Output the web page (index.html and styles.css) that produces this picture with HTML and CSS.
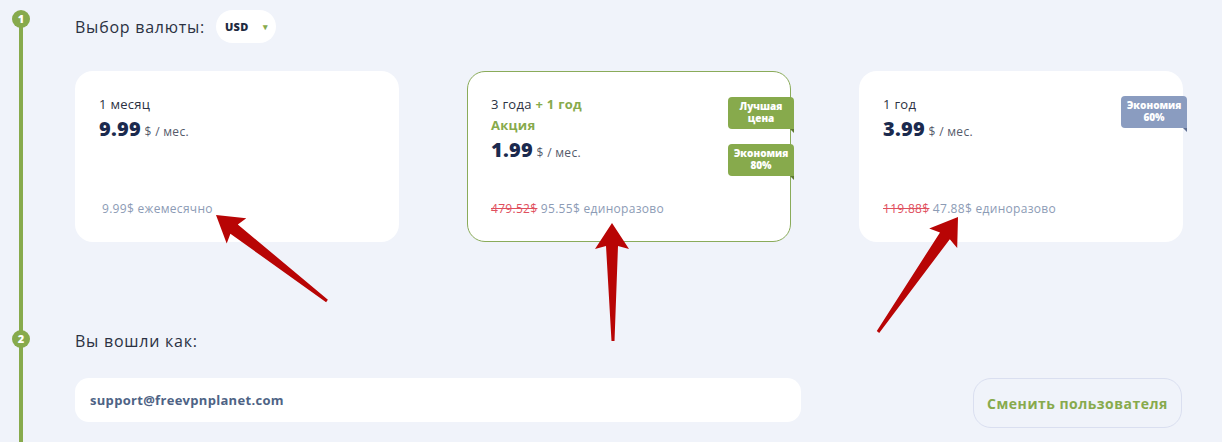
FILE: index.html
```html
<!DOCTYPE html>
<html lang="ru">
<head>
  <meta charset="UTF-8">
  <title>Выбор тарифа</title>
  <link rel="stylesheet" href="styles.css">
</head>
<body>
  <div class="steps">
    <div class="step">
      <span class="marker">1</span>
      <div class="step-head">
        <span class="step-title">Выбор валюты:</span>
        <div class="currency">USD <span class="caret">▾</span></div>
      </div>

      <div class="plans">
        <div class="plan">
          <div class="plan-name">1 месяц</div>
          <div class="plan-price"><b>9.99</b> $ / мес.</div>
          <div class="plan-total plan-total-shift">9.99$ ежемесячно</div>
        </div>

        <div class="plan plan-active">
          <div class="plan-name">3 года <span class="bonus">+ 1 год</span></div>
          <div class="plan-promo">Акция</div>
          <div class="plan-price"><b>1.99</b> $ / мес.</div>
          <div class="plan-total"><s>479.52$</s> 95.55$ единоразово</div>
          <div class="badge badge-top">Лучшая<br>цена</div>
          <div class="badge badge-second">Экономия<br>80%</div>
        </div>

        <div class="plan">
          <div class="plan-name">1 год</div>
          <div class="plan-price"><b>3.99</b> $ / мес.</div>
          <div class="plan-total"><s>119.88$</s> 47.88$ единоразово</div>
          <div class="badge badge-top badge-grey">Экономия<br>60%</div>
        </div>
      </div>
    </div>

    <div class="step step-user">
      <span class="marker">2</span>
      <div class="step-head">
        <span class="step-title">Вы вошли как:</span>
      </div>
      <div class="user-row">
        <div class="user-field">support@freevpnplanet.com</div>
        <button class="switch-btn">Сменить пользователя</button>
      </div>
    </div>
  </div>

  <!-- стрелки-пометки поверх скриншота -->
  <svg class="arrows" width="1222" height="442" viewBox="0 0 1222 442">
    <polygon points="216,215 246.3,218.3 237.8,224.4 327.9,299.8 326.1,302.2 230.4,233.8 226.7,243.5"/>
    <polygon points="612,223 629,249 618,246 614.5,341 611.5,341 606,246 595,249"/>
    <polygon points="958,217 957.2,248 949.8,239.2 879.2,332.9 876.8,331.1 940,232.4 929.2,228.6"/>
  </svg>
</body>
</html>
```

FILE: styles.css
```css
body {
  margin: 0;
  background: #f0f3fa;
  font-family: "Open Sans", Arial, sans-serif;
  letter-spacing: 0.3px;
  color: #2b3142;
  position: relative;
  height: 442px;
  overflow: hidden;
}
.steps {
  position: relative;
  height: 442px;
  box-sizing: border-box;
  padding: 10px 40px 0 75px;
}
.steps::before {
  content: "";
  position: absolute;
  left: 19px;
  top: 19px;
  bottom: 0;
  width: 4px;
  background: #87aa4c;
}
.step {
  position: relative;
}
.marker {
  position: absolute;
  left: -63px;
  top: 0;
  width: 18px;
  height: 18px;
  border-radius: 50%;
  background: #87aa4c;
  color: #fff;
  font-size: 11px;
  font-weight: 800;
  line-height: 18px;
  letter-spacing: 0;
  text-align: center;
}
.step-head {
  display: flex;
  align-items: center;
  gap: 11px;
  height: 33px;
}
.step-title {
  font-size: 16px;
  letter-spacing: 0.75px;
}
.currency {
  width: 60px;
  height: 33px;
  box-sizing: border-box;
  padding-left: 9px;
  border-radius: 17px;
  background: #fff;
  font-size: 11px;
  font-weight: 800;
  color: #1e2a40;
  display: flex;
  align-items: center;
  gap: 14px;
}
.caret {
  color: #87aa4c;
  font-size: 9px;
}
.plans {
  display: grid;
  grid-template-columns: repeat(3, 324px);
  gap: 68px;
  margin-top: 28px;
}
.plan {
  position: relative;
  height: 171px;
  box-sizing: border-box;
  padding: 24px 24px 25px;
  background: #fff;
  border-radius: 18px;
  display: flex;
  flex-direction: column;
}
.plan-active {
  border: 1px solid #8aab5a;
  padding: 23px 23px 24px;
}
.plan-name {
  font-size: 13px;
  line-height: 18px;
}
.bonus, .plan-promo {
  color: #87aa4c;
  font-weight: 700;
}
.plan-promo {
  font-size: 13px;
  line-height: 18px;
  margin-top: 3px;
}
.plan-price {
  font-size: 12px;
  color: #555b6b;
  margin-top: 2px;
}
.plan-price b {
  font-size: 20px;
  font-weight: 800;
  color: #1b2a4e;
}
.plan-total {
  margin-top: auto;
  font-size: 12px;
  color: #8c9bb5;
}
.plan-total s {
  color: #e0505e;
}
.plan-total-shift {
  margin-left: 3px;
}
.badge {
  position: absolute;
  right: -4px;
  width: 66px;
  height: 32px;
  box-sizing: border-box;
  padding-top: 3px;
  border-radius: 4px 4px 0 4px;
  background: #87aa4c;
  color: #fff;
  font-size: 10px;
  font-weight: 800;
  line-height: 12px;
  letter-spacing: 0;
  text-align: center;
}
.badge::after {
  content: "";
  position: absolute;
  right: 0;
  bottom: -4px;
  border-top: 4px solid #5e7a30;
  border-left: 4px solid transparent;
}
.badge-top {
  top: 25px;
}
.badge-second {
  top: 72px;
}
.badge-grey {
  background: #8a9cc0;
}
.badge-grey::after {
  border-top-color: #5f6f92;
}
.step-user {
  margin-top: 82px;
}
.step-user .marker {
  top: 6px;
}
.user-row {
  display: flex;
  justify-content: space-between;
  align-items: flex-start;
  margin-top: 21px;
}
.user-field {
  width: 726px;
  height: 44px;
  box-sizing: border-box;
  padding-left: 15px;
  background: #fff;
  border-radius: 14px;
  font-size: 13px;
  font-weight: 700;
  color: #4e6385;
  display: flex;
  align-items: center;
}
.switch-btn {
  width: 209px;
  height: 50px;
  border: 1px solid #dadff0;
  border-radius: 18px;
  background: transparent;
  color: #87aa4c;
  font-family: inherit;
  font-size: 14px;
  font-weight: 700;
  letter-spacing: 0.5px;
}
.arrows {
  position: absolute;
  left: 0;
  top: 0;
  fill: #b80505;
  pointer-events: none;
}
```
